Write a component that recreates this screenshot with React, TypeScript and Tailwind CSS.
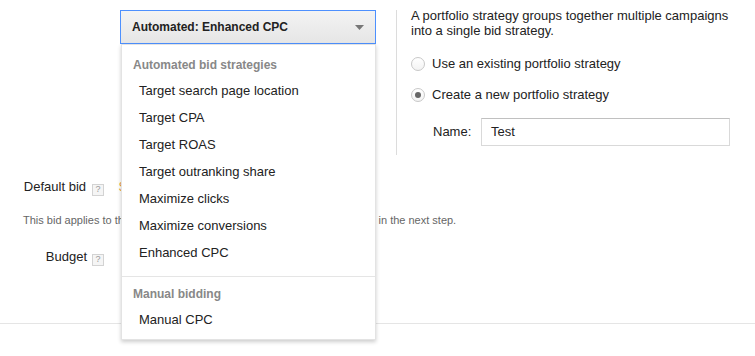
import React from "react";

const autoItems = [
  "Target search page location",
  "Target CPA",
  "Target ROAS",
  "Target outranking share",
  "Maximize clicks",
  "Maximize conversions",
  "Enhanced CPC",
];

function Help() {
  return (
    <span className="inline-flex h-[12px] w-[12px] items-center justify-center border border-[#d3d3d3] bg-[#f5f5f5] text-[9px] leading-none text-[#999]">
      ?
    </span>
  );
}

function Radio({ checked, label }: { checked?: boolean; label: string }) {
  return (
    <div className="flex h-[20px] items-center gap-[7px]">
      <span className="flex h-[14px] w-[14px] items-center justify-center rounded-full border border-[#c8c8c8] bg-gradient-to-b from-white to-[#f3f3f3]">
        {checked && <span className="h-[6px] w-[6px] rounded-full bg-[#666]" />}
      </span>
      <span className="text-[13px]">{label}</span>
    </div>
  );
}

export default function App() {
  return (
    <div className="relative h-[356px] w-[755px] overflow-hidden bg-white font-['Liberation_Sans',Arial,sans-serif] text-[#222]">
      {/* Top row */}
      <div className="flex pt-[10px]">
        <div className="w-[120px] shrink-0" />

        {/* Bid strategy select */}
        <div className="relative z-10 w-[256px] shrink-0">
          <button className="flex h-[34px] w-full items-center justify-between border border-[#4d90fe] bg-gradient-to-b from-[#f3f3f3] to-[#e6e6e6] pl-[11px] pr-[11px] text-[12px] font-bold text-[#222]">
            <span>Automated: Enhanced CPC</span>
            <svg width="9" height="5" viewBox="0 0 9 5">
              <path d="M0 0h9L4.5 5z" fill="#777" />
            </svg>
          </button>

          {/* Menu */}
          <div className="absolute left-[1px] top-[34px] w-[255px] border border-[#e3e3e3] bg-white pb-[6px] pt-[8px] shadow-[0_2px_4px_rgba(0,0,0,0.2)]">
            <div className="flex h-[24px] items-center px-[11px] text-[12px] font-bold text-[#888]">
              Automated bid strategies
            </div>
            {autoItems.map((item) => (
              <div key={item} className="flex h-[27px] items-center px-[17px] text-[13px] text-[#222]">
                {item}
              </div>
            ))}
            <div className="mt-[10px] border-t border-[#e5e5e5]" />
            <div className="mt-[5px] flex h-[24px] items-center px-[11px] text-[12px] font-bold text-[#888]">
              Manual bidding
            </div>
            <div className="flex h-[27px] items-center px-[17px] text-[13px] text-[#222]">Manual CPC</div>
          </div>
        </div>

        {/* Portfolio */}
        <div className="ml-[20px] h-[145px] border-l border-[#dcdcdc] pl-[14px]">
          <p className="-mt-[2px] text-[13px] leading-[15px]">
            A portfolio strategy groups together multiple campaigns
            <br />
            into a single bid strategy.
          </p>
          <div className="mt-[16px]">
            <Radio label="Use an existing portfolio strategy" />
          </div>
          <div className="mt-[11px]">
            <Radio checked label="Create a new portfolio strategy" />
          </div>
          <div className="mt-[13px] flex items-center pl-[22px]">
            <span className="w-[48px] text-[13px]">Name:</span>
            <div className="flex h-[28px] w-[249px] items-center border border-[#d9d9d9] border-t-[#c0c0c0] px-[9px] text-[13px]">
              Test
            </div>
          </div>
        </div>
      </div>

      {/* Lower section */}
      <div className="mt-[22px] flex h-[20px] items-center">
        <span className="w-[86px] text-right text-[13px]">Default bid</span>
        <span className="ml-[6px]">
          <Help />
        </span>
        <span className="ml-[15px] text-[13px] text-[#e8a33d]">$</span>
      </div>
      <p className="mt-[16px] pl-[23px] text-[11px] leading-[14px] text-[#666]">
        This bid applies to the first ad group in this campaign, which you'll create in the next step.
      </p>
      <div className="mt-[20px] flex h-[20px] items-center">
        <span className="w-[87px] text-right text-[13px]">Budget</span>
        <span className="ml-[5px]">
          <Help />
        </span>
      </div>
      <div className="mt-[56px] border-t border-[#e5e5e5]" />
    </div>
  );
}
